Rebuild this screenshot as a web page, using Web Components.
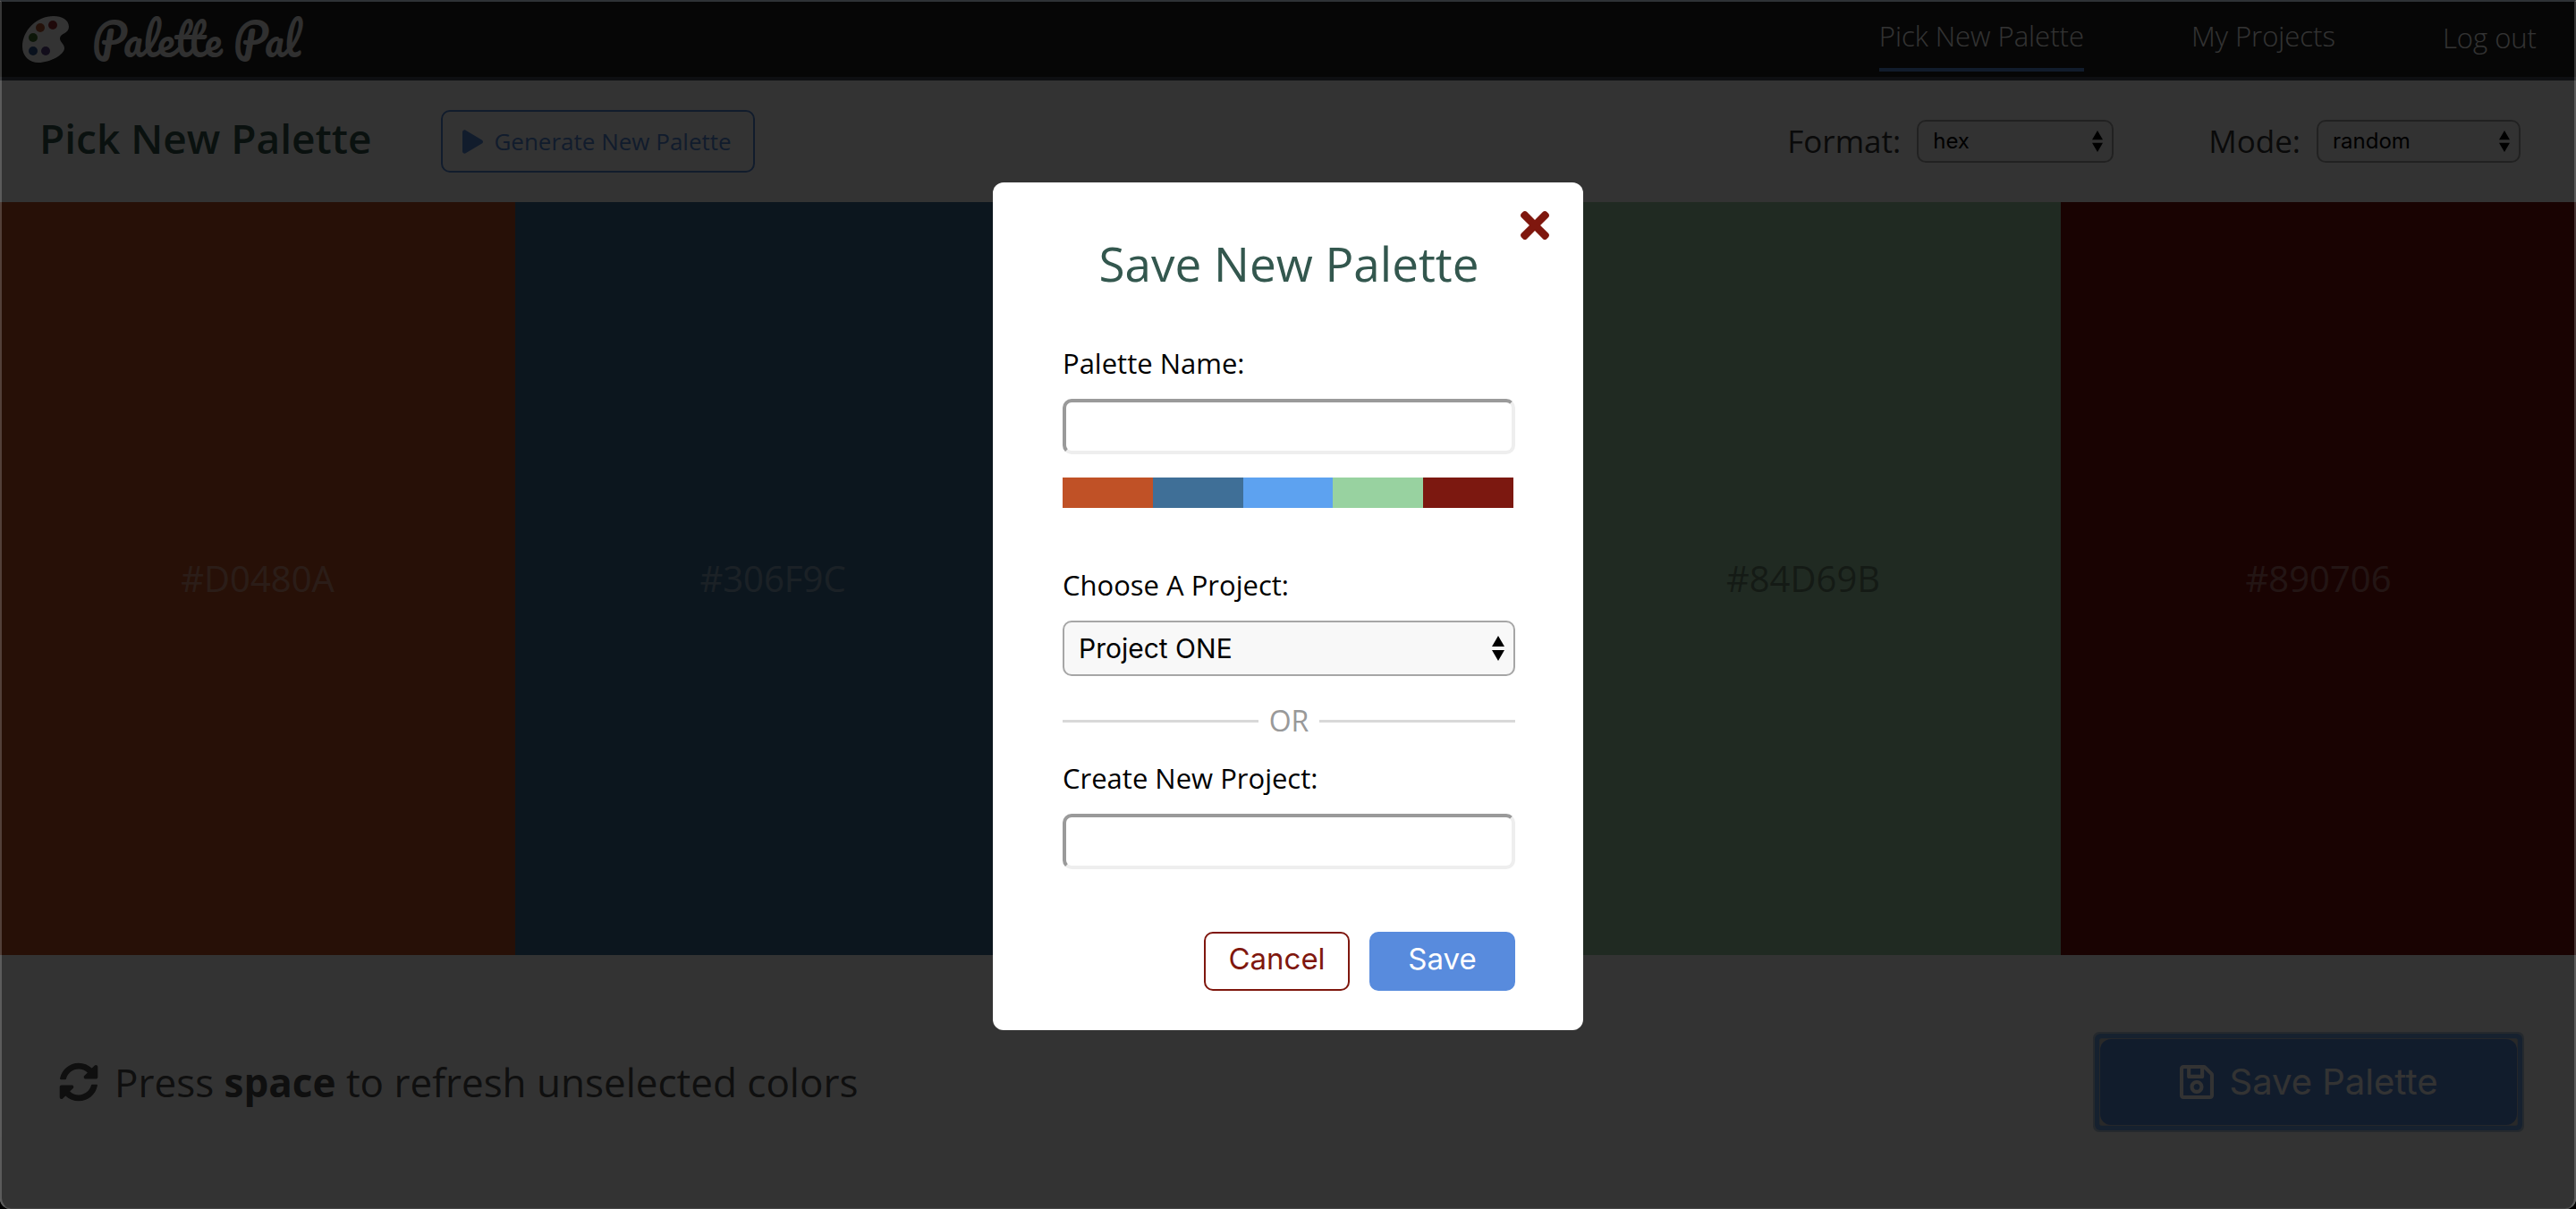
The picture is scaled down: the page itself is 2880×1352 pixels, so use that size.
<!DOCTYPE html>
<html lang="en">
<head>
<meta charset="utf-8">
<title>Palette Pal</title>
<style>
  html { background: #000; }
  body { margin: 0; font-family: "Open Sans", "Noto Sans", sans-serif; }
</style>
</head>
<body>
<palette-app></palette-app>

<script>
const define = (name, markup, setup) => {
  const template = document.createElement('template');
  template.innerHTML = `<style>:host,*{box-sizing:border-box}</style>${markup}`;
  customElements.define(name, class extends HTMLElement {
    connectedCallback() {
      if (this.shadowRoot) return;
      this.attachShadow({ mode: 'open' }).append(template.content.cloneNode(true));
      if (setup) setup(this, this.shadowRoot);
    }
  });
};

const ICONS = {
  play: ['0 0 448 512', 'M424.4 214.7L72.4 6.6C43.8-10.3 0 6.1 0 47.9V464c0 37.5 40.7 60.1 72.4 41.3l352-208c31.4-18.5 31.5-64.1 0-82.6z'],
  times: ['0 80 352 352', 'M242.72 256l100.07-100.07c12.28-12.28 12.28-32.19 0-44.48l-22.24-22.24c-12.28-12.28-32.19-12.28-44.48 0L176 189.28 75.93 89.21c-12.28-12.28-32.19-12.28-44.48 0L9.21 111.45c-12.28 12.28-12.28 32.19 0 44.48L109.28 256 9.21 356.07c-12.28 12.28-12.28 32.19 0 44.48l22.24 22.24c12.28 12.28 32.2 12.28 44.48 0L176 322.72l100.07 100.07c12.28 12.28 32.2 12.28 44.48 0l22.24-22.24c12.28-12.28 12.28-32.19 0-44.48L242.72 256z'],
  sync: ['0 0 512 512', 'M370.72 133.28C339.458 104.008 298.888 87.962 255.848 88c-77.458.068-144.328 53.178-162.791 126.85-1.344 5.363-6.122 9.15-11.651 9.15H24.103c-7.498 0-13.194-6.807-11.807-14.176C33.933 94.924 134.813 8 256 8c66.448 0 126.791 26.136 171.315 68.685L463.03 40.97C478.149 25.851 504 36.559 504 57.941V192c0 13.255-10.745 24-24 24H345.941c-21.382 0-32.09-25.851-16.971-40.971l41.75-41.749zM32 296h134.059c21.382 0 32.09 25.851 16.971 40.971l-41.75 41.75c31.262 29.273 71.835 45.319 114.876 45.28 77.418-.07 144.315-53.144 162.787-126.849 1.344-5.363 6.122-9.15 11.651-9.15h57.304c7.498 0 13.194 6.807 11.807 14.176C478.067 417.076 377.187 504 256 504c-66.448 0-126.791-26.136-171.315-68.685L48.97 471.03C33.851 486.149 8 475.441 8 454.059V320c0-13.255 10.745-24 24-24z'],
  save: ['0 32 448 448', 'M433.941 129.941l-83.882-83.882A48 48 0 0 0 316.118 32H48C21.49 32 0 53.49 0 80v352c0 26.51 21.49 48 48 48h352c26.51 0 48-21.49 48-48V163.882a48 48 0 0 0-14.059-33.941zM272 80v80H144V80h128zm122 352H54a6 6 0 0 1-6-6V86a6 6 0 0 1 6-6h42v104c0 13.255 10.745 24 24 24h176c13.255 0 24-10.745 24-24V83.882l78.243 78.243a6 6 0 0 1 1.757 4.243V426a6 6 0 0 1-6 6zM224 232c-48.523 0-88 39.477-88 88s39.477 88 88 88 88-39.477 88-88-39.477-88-88-88zm0 128c-22.056 0-40-17.944-40-40s17.944-40 40-40 40 17.944 40 40-17.944 40-40 40z']
};

define('app-icon', `
<style>
  :host { display: block; flex: none; }
  svg { display: block; width: 100%; height: 100%; fill: currentColor; }
</style>
<svg aria-hidden="true"><path/></svg>`, (host, root) => {
  const [box, d] = ICONS[host.getAttribute('name')];
  root.querySelector('svg').setAttribute('viewBox', box);
  root.querySelector('path').setAttribute('d', d);
});

define('nav-link', `
<style>
  :host { display: block; }
  a { display: block; padding-bottom: 14px; border-bottom: 4px solid transparent; color: #fff;
      font-size: 31px; font-weight: 300; line-height: 44px; text-decoration: none; white-space: nowrap; }
  :host([active]) a { border-color: #588bdd; }
</style>
<a href="#"><slot></slot></a>`);

define('app-header', `
<style>
  :host { display: flex; justify-content: space-between; align-items: flex-start;
          padding: 16px 44px 0 25px; height: 88px; background: #1e1e1e; border-bottom: 4px solid #464d59; }
  .brand { display: flex; align-items: center; gap: 26px; color: #fff; text-decoration: none; height: 52px; }
  svg { width: 52px; height: 52px; }
  h1 { margin: 0; font: 400 48px/52px Pacifico, cursive; color: #eee; }
  nav { display: flex; align-items: flex-start; gap: 120px; }
  button { padding: 2px 0 0; border: 0; background: none; color: #fff; font: 300 31px/44px "Open Sans", sans-serif; }
</style>
<a class="brand" href="#">
  <svg viewBox="0 0 52 52" aria-hidden="true">
    <path fill="#fff" d="M35 0C44 0 52 4 52 12C52 20 42 19 42 25C42 29 47 31 47 36C47 43 31 52 18 52C8 52 0 45 0 34C0 16 16 0 35 0Z"/>
    <circle cx="20" cy="13" r="5" fill="#b5562f"/><circle cx="34" cy="10" r="5" fill="#9c3136"/>
    <circle cx="12" cy="24" r="5" fill="#3e702c"/><circle cx="12" cy="39" r="5" fill="#2f5590"/>
    <circle cx="26" cy="39" r="5" fill="#5a4385"/>
  </svg>
  <h1>Palette Pal</h1>
</a>
<nav>
  <nav-link active>Pick New Palette</nav-link>
  <nav-link>My Projects</nav-link>
  <button type="button">Log out</button>
</nav>`);

define('select-field', `
<style>
  :host { display: flex; align-items: center; gap: 18px; }
  label { font-size: 35px; line-height: 48px; color: #333; white-space: nowrap; }
  .box { position: relative; width: var(--select-width, 220px); }
  select { display: block; width: 100%; height: 48px; padding: 0 16px; appearance: none;
           border: 2px solid #a6a6a6; border-radius: 10px; background: #f8f8f8; color: #000;
           font: 24px/32px Inter, sans-serif; }
  svg { position: absolute; top: 0; bottom: 0; right: 12px; margin: auto 0; width: 12px; height: 24px; pointer-events: none; }
  :host([stacked]) { flex-direction: column; align-items: stretch; gap: 18px; }
  :host([stacked]) label { font-size: 31px; line-height: 44px; color: #000; }
  :host([stacked]) .box { width: auto; }
  :host([stacked]) select { height: 62px; font-size: 30px; line-height: 40px; }
  :host([stacked]) svg { width: 14px; height: 28px; }
</style>
<label for="field"></label>
<div class="box">
  <select id="field"><option></option></select>
  <svg viewBox="0 0 14 28" aria-hidden="true"><path d="M7 0L14 12H0ZM7 28L0 16H14Z"/></svg>
</div>`, (host, root) => {
  root.querySelector('label').textContent = host.getAttribute('label');
  root.querySelector('option').textContent = host.getAttribute('value');
});

define('text-field', `
<style>
  :host { display: flex; flex-direction: column; gap: 18px; }
  label { font-size: 31px; line-height: 44px; color: #000; }
  input { display: block; width: 100%; height: 62px; padding: 0 14px; background: #fff; border: 4px solid;
          border-color: #9a9a9a #eee #eee #9a9a9a; border-radius: 10px; outline: 0; font: 30px/40px Inter, sans-serif; }
</style>
<label for="field"></label>
<input id="field" type="text">`, (host, root) => {
  root.querySelector('label').textContent = host.getAttribute('label');
});

define('palette-toolbar', `
<style>
  :host { display: flex; align-items: center; height: 136px; padding: 0 62px 0 44px; }
  h2 { margin: 0 78px 0 0; padding-bottom: 8px; font-size: 46px; font-weight: 600; line-height: 64px; color: #33574e; white-space: nowrap; }
  button { display: flex; align-items: center; gap: 12px; height: 70px; padding: 0 24px 0 22px; border: 2px solid #588bdd;
           border-radius: 10px; background: none; color: #588bdd; font: 26px/36px "Open Sans", sans-serif; white-space: nowrap; }
  app-icon { width: 23px; height: 27px; }
  .options { display: flex; gap: 106px; margin-left: auto; }
  .mode { --select-width: 228px; }
</style>
<h2>Pick New Palette</h2>
<button type="button"><app-icon name="play"></app-icon><span>Generate New Palette</span></button>
<div class="options">
  <select-field label="Format:" value="hex"></select-field>
  <select-field class="mode" label="Mode:" value="random"></select-field>
</div>`);

define('color-column', `
<style>
  :host { display: flex; flex: 1 1 0; align-items: center; justify-content: center; background: var(--color);
          color: rgba(255,255,255,.4); font-size: 40px; line-height: 56px; }
  :host([light]) { color: rgba(0,0,0,.4); }
</style>
<slot></slot>`);

define('palette-footer', `
<style>
  :host { display: flex; align-items: center; justify-content: space-between; padding: 94px 66px; }
  p { display: flex; align-items: center; gap: 18px; margin: 0; font-size: 44px; line-height: 60px; color: #4b4b4b; }
  p app-icon { width: 44px; height: 44px; }
  b { font-weight: 700; }
  .focus { border-radius: 2px; background: #ccc; box-shadow: 0 0 0 1px #b8c4d2, 0 0 0 6px #70a4e8, 0 0 0 8px #b8cce0; }
  button { display: flex; align-items: center; justify-content: center; gap: 18px; width: 466px; height: 96px; padding: 0;
           border: 0; border-radius: 12px; background: #588bdd; color: #fff; font: 40px/56px Inter, sans-serif; }
  button app-icon { width: 38px; height: 38px; }
</style>
<p><app-icon name="sync"></app-icon><span>Press <b>space</b> to refresh unselected colors</span></p>
<div class="focus"><button type="button"><app-icon name="save"></app-icon><span>Save Palette</span></button></div>`);

define('save-dialog', `
<style>
  :host { display: flex; flex-direction: column; position: relative; width: 660px; padding: 55px 76px 44px 78px;
          background: #fff; border-radius: 12px; }
  .close { position: absolute; top: 32px; right: 38px; width: 32px; height: 32px; padding: 0; border: 0; background: none; color: #7f170e; }
  .close app-icon { height: 100%; }
  h2 { margin: 0 0 53px; font-size: 53px; font-weight: 400; line-height: 72px; color: #33574e; text-align: center; white-space: nowrap; }
  .swatches { display: flex; height: 34px; margin: 26px 2px 64px 0; }
  .swatches i { flex: 1; background: var(--color); }
  .or { display: flex; align-items: center; gap: 12px; margin: 28px 0 20px; font-size: 32px; line-height: 44px; color: #999; }
  .or::before, .or::after { content: ""; flex: 1; height: 3px; background: #d8d8d8; }
  .actions { display: flex; justify-content: flex-end; gap: 22px; margin-top: 70px; }
  .actions button { width: 163px; height: 66px; padding: 0 0 6px; border: 2px solid #7f170e; border-radius: 10px; background: #fff;
                    color: #7f170e; font: 33px/44px Inter, sans-serif; }
  .actions .primary { border-color: #588bdd; background: #588bdd; color: #fff; }
</style>
<button class="close" type="button" aria-label="Close"><app-icon name="times"></app-icon></button>
<h2>Save New Palette</h2>
<text-field label="Palette Name:"></text-field>
<div class="swatches">
  <i style="--color:#c05126"></i><i style="--color:#3f6f97"></i><i style="--color:#5da2f0"></i><i style="--color:#98d2a0"></i><i style="--color:#7c1810"></i>
</div>
<select-field stacked label="Choose A Project:" value="Project ONE"></select-field>
<div class="or">OR</div>
<text-field label="Create New Project:"></text-field>
<div class="actions">
  <button type="button">Cancel</button>
  <button class="primary" type="button">Save</button>
</div>`);

define('palette-app', `
<style>
  :host { display: flex; flex-direction: column; position: relative; min-height: 100vh; padding-top: 2px; background: #fff;
          border-radius: 0 0 12px 12px; overflow: hidden; }
  .columns { display: flex; flex: 1; }
  .backdrop { position: absolute; inset: 0; display: flex; align-items: center; justify-content: center;
              padding-top: 4px; background: rgba(0,0,0,.8); }
  .edge { position: absolute; inset: 0; pointer-events: none; border: 2px solid rgba(255,255,255,.2);
          border-top-color: #2e3236; border-bottom: 1px solid rgba(255,255,255,.1); border-radius: 0 0 12px 12px; }
</style>
<app-header></app-header>
<palette-toolbar></palette-toolbar>
<div class="columns">
  <color-column style="--color:#c05126">#D0480A</color-column>
  <color-column style="--color:#3f6f97">#306F9C</color-column>
  <color-column style="--color:#5da2f0"></color-column>
  <color-column light style="--color:#a2d0a8">#84D69B</color-column>
  <color-column style="--color:#7f100c">#890706</color-column>
</div>
<palette-footer></palette-footer>
<div class="backdrop"><save-dialog role="dialog" aria-label="Save New Palette"></save-dialog></div>
<div class="edge"></div>`);
</script>
</body>
</html>
